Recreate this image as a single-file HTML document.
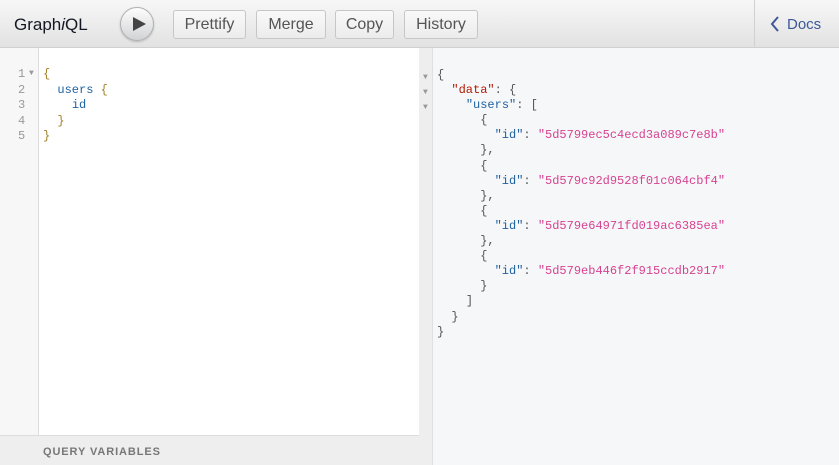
<!DOCTYPE html>
<html><head><style>
*{margin:0;padding:0;box-sizing:border-box}
body{width:839px;height:465px;overflow:hidden;font-family:"Liberation Sans",sans-serif;background:#fff;position:relative}
.tb{position:absolute;left:0;top:0;width:839px;height:48px;background:linear-gradient(#f7f7f7,#e2e2e2);border-bottom:1px solid #d0d0d0}
.title{position:absolute;left:14px;top:15px;font-size:17px;color:#141823}
.run{position:absolute;left:120px;top:7px;width:34px;height:34px;border-radius:50%;border:1px solid #b0b0b0;background:linear-gradient(#fdfdfd,#d2d3d6);box-shadow:0 1px 2px rgba(0,0,0,.2)}
.run:after{content:"";position:absolute;left:12px;top:9px;border-left:13px solid #444;border-top:7.5px solid transparent;border-bottom:7.5px solid transparent}
.btn{position:absolute;top:10px;height:29px;border:1px solid #c6c6c6;border-radius:3px;background:linear-gradient(#f9f9f9,#ececec);font-size:16px;color:#555;text-align:center;line-height:27px}
.docs{position:absolute;left:754px;top:0;width:85px;height:47px;border-left:1px solid #d0d0d0;color:#3b5998;font-size:15px}
.gut{position:absolute;left:0;top:48px;width:39px;height:387px;background:#f7f7f7;border-right:1px solid #ddd}
.ed{position:absolute;left:39px;top:48px;width:380px;height:387px;background:#fff}
.qv{position:absolute;left:0;top:435px;width:419px;height:30px;background:#eee;border-top:1px solid #ddd;font-size:11px;letter-spacing:0.9px;color:#777;font-weight:bold;padding:10px 0 0 43px}
.div{position:absolute;left:419px;top:48px;width:14px;height:417px;background:#eee;border-right:1px solid #e0e0e0}
.res{position:absolute;left:433px;top:48px;width:406px;height:417px;background:#f6f7f8}
pre{position:absolute;font-family:"Liberation Mono",monospace;font-size:12px;line-height:15.5px}
.p{color:#555}.o{color:#a0802a}.k{color:#1f61a0}.s{color:#d64292}.a{color:#b11a04}.b{color:#1f61a0}.n{color:#999}
</style></head><body>
<div class="tb">
<div class="title">Graph<i>i</i>QL</div>
<div class="run"></div>
<div class="btn" style="left:173px;width:73px">Prettify</div>
<div class="btn" style="left:256px;width:70px">Merge</div>
<div class="btn" style="left:335px;width:59px">Copy</div>
<div class="btn" style="left:404px;width:74px">History</div>
<div class="docs"><svg style="position:absolute;left:15px;top:16px" width="10" height="16"><path d="M8 1 L2 8 L8 15" stroke="#3b5998" stroke-width="2" fill="none"/></svg><span style="position:absolute;left:32px;top:16px">Docs</span></div>
</div>
<div class="gut"></div>
<div class="ed"></div>
<pre class="n" style="left:18px;top:67px">1
2
3
4
5</pre>
<pre class="n" style="left:29px;top:66px;font-size:8px">▼</pre>
<pre style="left:43px;top:67px"><span class="o">{</span>
  <span class="k">users</span> <span class="o">{</span>
    <span class="k">id</span>
  <span class="o">}</span>
<span class="o">}</span></pre>
<div class="qv">QUERY VARIABLES</div>
<div class="div"></div>
<div class="res"></div>
<pre class="n" style="left:423px;top:70px;font-size:8px;line-height:15.1px">▼
▼
▼</pre>
<pre style="left:437px;top:68px;line-height:15.1px"><span class="p">{</span>
  <span class="a">"data"</span><span class="p">: {</span>
    <span class="b">"users"</span><span class="p">: [</span>
      <span class="p">{</span>
        <span class="k">"id"</span><span class="p">: </span><span class="s">"5d5799ec5c4ecd3a089c7e8b"</span>
      <span class="p">},</span>
      <span class="p">{</span>
        <span class="k">"id"</span><span class="p">: </span><span class="s">"5d579c92d9528f01c064cbf4"</span>
      <span class="p">},</span>
      <span class="p">{</span>
        <span class="k">"id"</span><span class="p">: </span><span class="s">"5d579e64971fd019ac6385ea"</span>
      <span class="p">},</span>
      <span class="p">{</span>
        <span class="k">"id"</span><span class="p">: </span><span class="s">"5d579eb446f2f915ccdb2917"</span>
      <span class="p">}</span>
    <span class="p">]</span>
  <span class="p">}</span>
<span class="p">}</span></pre>
</body></html>
